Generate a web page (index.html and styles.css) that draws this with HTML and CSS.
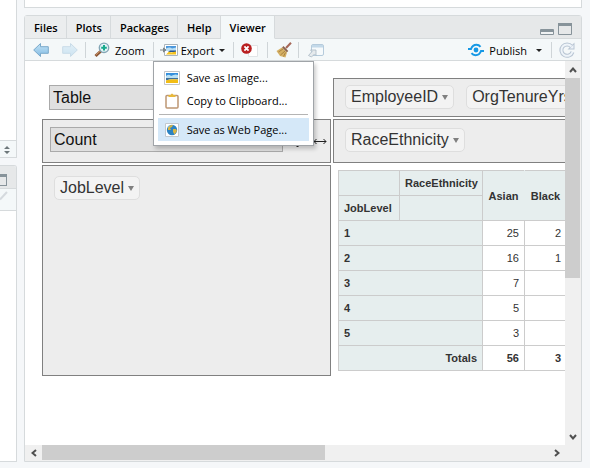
FILE: index.html
```html
<!DOCTYPE html>
<html lang="en">
<head>
<meta charset="utf-8">
<title>Viewer</title>
<link rel="stylesheet" href="styles.css">
</head>
<body>
<div class="workspace">
  <aside class="side">
    <section class="side-pane side-source">
      <footer class="status">
        <svg width="6" height="8" viewBox="0 0 6 8"><path d="M3 0L6 3H0zM3 8L0 5h6z" fill="#6d777a"/></svg>
      </footer>
    </section>
    <section class="side-pane side-console">
      <header class="side-head">
        <svg width="7" height="12" viewBox="0 0 7 12"><path d="M0 0h7v12H0v-1h6V3H0z" fill="#87939a"/></svg>
      </header>
      <div class="side-tools">
        <svg width="8" height="10" viewBox="0 0 8 10"><path d="M0 8.500L7 1" stroke="#d5dade" stroke-width="2" fill="none"/></svg>
      </div>
    </section>
  </aside>

  <main class="main">
    <section class="upper-pane"></section>
    <section class="pane">
      <header class="tabbar">
        <nav class="tabs">
          <button class="tab">Files</button>
          <button class="tab">Plots</button>
          <button class="tab">Packages</button>
          <button class="tab">Help</button>
          <button class="tab tab-active">Viewer</button>
        </nav>
        <div class="window-buttons">
          <button class="icon-button" aria-label="Minimize"><svg width="14" height="13" viewBox="0 0 14 13"><path d="M.5 7.500h13v5H.5z" fill="#f0f2f3" stroke="#87939a"/><path d="M1 7h12v3H1z" fill="#87939a"/></svg></button>
          <button class="icon-button" aria-label="Maximize"><svg width="14" height="13" viewBox="0 0 14 13"><path d="M.5 1.500h13v11H.5z" fill="#e6e8e9" stroke="#87939a"/><path d="M0 1h14v3H0z" fill="#87939a"/></svg></button>
        </div>
      </header>

      <div class="toolbar">
        <div class="tool-group group-nav">
          <button class="icon-button" aria-label="Back"><svg width="16" height="16" viewBox="0 0 16 16"><defs><linearGradient id="blue" x1="0" y1="0" x2="0" y2="1"><stop offset="0" stop-color="#c3e3f5"/><stop offset="1" stop-color="#83bce4"/></linearGradient></defs><path d="M.7 8L7.500 1.500v3.200h7.800v6.600H7.500v3.200z" fill="url(#blue)" stroke="#7aa9ca"/></svg></button>
          <button class="icon-button faded" aria-label="Forward" disabled><svg width="16" height="16" viewBox="0 0 16 16"><path d="M15.300 8L8.500 1.500v3.200H.7v6.600h7.800v3.200z" fill="url(#blue)" stroke="#7aa9ca"/></svg></button>
        </div>
        <div class="tool-group group-zoom">
          <button class="tool-button"><svg width="16" height="16" viewBox="0 0 16 16"><path d="M1.500 14L7 9" stroke="#8b5635" stroke-width="3"/><path d="M1.800 13L6.500 8.800" stroke="#c99264" stroke-width="1"/><circle cx="10" cy="5.800" r="4.700" fill="#e2f3f7" stroke="#83a5b5" stroke-width="1.400"/><path d="M10 3v5.600M7.200 5.800h5.600" stroke="#17a98c" stroke-width="2"/></svg><span>Zoom</span></button>
        </div>
        <div class="tool-group group-export">
          <button class="tool-button"><svg width="18" height="16" viewBox="0 0 18 16"><path d="M4.500 2.500h13v11h-13z" fill="#fff" stroke="#aab5bc"/><path d="M6 4h10v4H6z" fill="#4a97dc"/><path d="M6 6.500q4-2 6 0l4-1V9H6z" fill="#b8def4"/><path d="M10 8.500h6V10H8z" fill="#24538f"/><path d="M6 12.500l3-3 2 1 5-1v3z" fill="#f4c21d"/><path d="M0 8h4M3.500 6L6 8l-2.500 2z" stroke="#7d8588" fill="#7d8588"/></svg><span>Export</span><i class="caret"></i></button>
          <div class="menu" role="menu">
            <button class="menu-item" role="menuitem"><svg width="16" height="16" viewBox="0 0 16 16"><path d="M.5 1.500h15v13H.5z" fill="#fff" stroke="#c2c5c8"/><path d="M2 3h12v5H2z" fill="#348fdc"/><path d="M2 6q3-2.500 5 0 4-2.500 7-1v3H2z" fill="#b9e0f4"/><path d="M2 8h12v1.500q-7-1-12 1z" fill="#3f7099"/><path d="M2 13v-2.500q5-2 12-1V13z" fill="#f2bd16"/></svg><span>Save as Image...</span></button>
            <button class="menu-item" role="menuitem"><svg width="16" height="16" viewBox="0 0 16 16"><rect x="2" y="2.500" width="12" height="12.500" rx="1" fill="#fff" stroke="#bd9673" stroke-width="1.500"/><path d="M4.500 4V2h2Q8-1 9.500 2h2v2z" fill="#e8b93c"/></svg><span>Copy to Clipboard...</span></button>
            <hr class="menu-rule">
            <button class="menu-item menu-item-active" role="menuitem"><svg width="16" height="16" viewBox="0 0 16 16"><path d="M1.500 1.500h13v13h-13z" fill="#fff" stroke="#c1c8ce"/><circle cx="8" cy="8" r="5.200" fill="#2b83c3"/><path d="M4 5q2-2.500 5-2L8 5 6 6l1 2H4zM9 7h3l1 2-2.500 3.500L9 10z" fill="#d8b543"/><path d="M3.500 6q0-2 2.500-2.500" stroke="#83c4ed" fill="none"/></svg><span>Save as Web Page...</span></button>
          </div>
        </div>
        <div class="tool-group group-icon">
          <button class="icon-button" aria-label="Remove viewer item"><svg width="18" height="16" viewBox="0 0 18 16"><path d="M7.500 3.500h9v11h-9z" fill="#fff" stroke="#e1e5e7"/><circle cx="5.500" cy="6.500" r="5.300" fill="#b91f20"/><path d="M3.400 4.400l4.200 4.200M7.600 4.400L3.400 8.600" stroke="#fff" stroke-width="1.800"/></svg></button>
        </div>
        <div class="tool-group group-broom">
          <button class="icon-button" aria-label="Clear all"><svg width="16" height="16" viewBox="0 0 16 16"><path d="M10 6L15 .8" stroke="#a66758" stroke-width="2"/><path d="M6 5.500l5 5-1.500 5L4 14 .5 9z" fill="#d5b064"/><path d="M2.500 10L7 7M4.500 13L9 9M7.500 14.500l2-4" stroke="#a98443" fill="none"/><path d="M6.800 4.800l4.800 4.800" stroke="#8b634d" stroke-width="2"/></svg></button>
        </div>
        <div class="tool-group group-popout">
          <button class="icon-button" aria-label="Show in new window"><svg width="16" height="16" viewBox="0 0 16 16"><rect x="3.500" y="2.500" width="12" height="11" rx="1.500" fill="#f6fafc" stroke="#b5cbdc"/><path d="M4 3h11v2.500H4z" fill="#c3d9e9"/><path d="M.5 13.500L4 9.500 2.500 8H8v5.500L6.500 12 3.500 15z" fill="#e5eaed" stroke="#a9b9c4" stroke-width=".8"/></svg></button>
        </div>
        <div class="tool-group group-publish">
          <button class="tool-button"><svg width="16" height="14" viewBox="0 0 16 14"><circle cx="8" cy="7" r="2.400" fill="#1598e5"/><path d="M0 6h3Q4.500 1.800 8.500 1.800q2.500 0 4 2M16 8h-3q-1.500 4.200-5.500 4.200-2.500 0-4-2" stroke="#1598e5" stroke-width="2" fill="none"/></svg><span>Publish</span><i class="caret caret-far"></i></button>
        </div>
        <div class="tool-group group-refresh">
          <button class="icon-button" aria-label="Refresh"><svg width="16" height="16" viewBox="0 0 16 16"><path d="M12.500 4.500A5.700 5.700 0 1 0 13.500 10" stroke="#b8c5d3" stroke-width="4" fill="none"/><path d="M15.500 .5v7h-7z" fill="#b8c5d3"/><path d="M12.500 4.500A5.700 5.700 0 1 0 13.500 10" stroke="#eef4f9" stroke-width="2" fill="none"/><path d="M14.500 2.800v3.700h-3.700z" fill="#eef4f9"/></svg></button>
        </div>
      </div>

      <div class="viewer">
        <div class="canvas">
          <div class="pivot">
            <div class="renderer"><select class="picker" aria-label="Renderer"><option>Table</option></select></div>
            <div class="zone unused">
              <button class="attr">EmployeeID<i></i></button>
              <button class="attr">OrgTenureYrs<i></i></button>
            </div>
            <div class="zone values">
              <select class="picker" aria-label="Aggregator"><option>Count</option></select>
              <span class="sorts">
                <a href="#" aria-label="Row order"><svg width="7" height="14" viewBox="0 0 7 14"><path d="M3.500 1v12M1 3.500L3.500 1 6 3.500M1 10.500L3.500 13 6 10.500" stroke="#222" fill="none"/></svg></a>
                <a href="#" aria-label="Column order"><svg width="14" height="7" viewBox="0 0 14 7"><path d="M1 3.500h12M3.500 1L1 3.500 3.500 6M10.500 1L13 3.500 10.500 6" stroke="#222" fill="none"/></svg></a>
              </span>
            </div>
            <div class="zone cols"><button class="attr">RaceEthnicity<i></i></button></div>
            <div class="zone rows"><button class="attr">JobLevel<i></i></button></div>
            <div class="output">
              <table class="result">
                <colgroup><col class="c-level"><col class="c-race"><col class="c-num"><col class="c-num"></colgroup>
                <thead>
                  <tr><th></th><th>RaceEthnicity</th><th class="group" rowspan="2">Asian</th><th class="group" rowspan="2">Black</th></tr>
                  <tr><th>JobLevel</th><th></th></tr>
                </thead>
                <tbody>
                  <tr><th colspan="2">1</th><td>25</td><td>2</td></tr>
                  <tr><th colspan="2">2</th><td>16</td><td>1</td></tr>
                  <tr><th colspan="2">3</th><td>7</td><td></td></tr>
                  <tr><th colspan="2">4</th><td>5</td><td></td></tr>
                  <tr><th colspan="2">5</th><td>3</td><td></td></tr>
                  <tr class="totals"><th colspan="2">Totals</th><td>56</td><td>3</td></tr>
                </tbody>
              </table>
            </div>
          </div>
        </div>
        <div class="scroll scroll-y">
          <button class="scroll-end" aria-label="Scroll up"><svg width="8" height="6" viewBox="0 0 8 6"><path d="M1 5l3-3.500L7 5" fill="none" stroke="#505050" stroke-width="2"/></svg></button>
          <div class="track"><div class="thumb"></div></div>
          <button class="scroll-end" aria-label="Scroll down"><svg width="8" height="6" viewBox="0 0 8 6"><path d="M1 1l3 3.500L7 1" fill="none" stroke="#505050" stroke-width="2"/></svg></button>
        </div>
        <div class="scroll scroll-x">
          <button class="scroll-end" aria-label="Scroll left"><svg width="6" height="8" viewBox="0 0 6 8"><path d="M5 1L1.500 4 5 7" fill="none" stroke="#505050" stroke-width="2"/></svg></button>
          <div class="track"><div class="thumb"></div></div>
          <button class="scroll-end" aria-label="Scroll right"><svg width="6" height="8" viewBox="0 0 6 8"><path d="M1 1l3.500 3L1 7" fill="none" stroke="#505050" stroke-width="2"/></svg></button>
        </div>
        <div class="corner"></div>
      </div>
    </section>
  </main>
</div>
</body>
</html>
```
FILE: styles.css
```css
* { box-sizing: border-box; }
body {
  margin: 0;
  background: #f5f7f9;
  color: #000;
  font: 11px "Open Sans", "Noto Sans", sans-serif;
}
button, select { font: inherit; color: inherit; margin: 0; padding: 0; border: 0; background: none; }
svg { display: block; flex: none; }

.workspace {
  display: grid;
  grid-template-columns: 17px minmax(0, 1fr);
  gap: 7px;
  height: 100vh;
  padding: 0 8px 6px 0;
}
.side, .main { display: flex; flex-direction: column; gap: 7px; min-height: 0; }
.side-pane { border: solid #d6dadc; border-width: 0 1px 1px 0; background: #fff; }
.side-source { flex: 0 0 158px; display: flex; flex-direction: column; justify-content: flex-end; }
.side-console { flex: 1; border-top-width: 1px; border-top-right-radius: 3px; overflow: hidden; }
.status { height: 17px; padding: 5px 0 0 4px; border-top: 1px solid #d6dadc; background: #f4f8f9; }
.side-head { height: 23px; padding-top: 8px; background: #e6e8e9; border-bottom: 1px solid #d6dadc; }
.side-tools { height: 22px; padding-top: 2px; background: #f4f8f9; border-bottom: 1px solid #d6dadc; }

.upper-pane { flex: 0 0 8px; border: 1px solid #d6dadc; border-top: 0; background: #fff; }
.pane {
  flex: 1;
  display: flex;
  flex-direction: column;
  min-height: 0;
  border: 1px solid #d6dadc;
  border-radius: 3px 3px 0 0;
  background: #fff;
}
.tabbar { display: flex; justify-content: space-between; height: 23px; background: #e6e8e9; border-bottom: 1px solid #d6dadc; }
.tabs { display: flex; height: 23px; }
.tab {
  padding: 0 8px 0 9px;
  border: solid #d6dadc;
  border-width: 0 1px 1px 0;
  background: #ebedee;
  font-weight: 600;
}
.tab-active { background: #f4f8f9; border-bottom-color: #f4f8f9; }
.window-buttons { display: flex; gap: 4px; padding: 4px 9px 0 0; }
.icon-button { display: block; height: 16px; }
.faded { opacity: .35; }

.toolbar { display: flex; height: 22px; background: #f4f8f9; border-bottom: 1px solid #d6dadc; }
.tool-group { display: flex; align-items: center; height: 22px; position: relative; }
.tool-group + .tool-group::before { content: ""; align-self: center; width: 1px; height: 16px; background: #cfd5d8; }
.tool-button { display: flex; align-items: center; gap: 5px; height: 22px; }
.group-nav { gap: 13px; padding: 0 7px 0 8px; }
.group-zoom .tool-button { padding: 0 8px; }
.group-export .tool-button { gap: 3px; padding: 0 8px 0 6px; }
.group-icon .icon-button { margin: 0 8px 0 7px; }
.group-broom .icon-button { margin: 0 6px 0 8px; }
.group-popout .icon-button { margin-left: 9px; }
.tool-group.group-publish { margin-left: auto; }
.tool-group.group-publish::before { display: none; }
.group-publish .tool-button { padding-right: 9px; }
.group-refresh .icon-button { margin: 0 6px 0 7px; }
.caret { border: solid transparent; border-width: 3px 3px 0; border-top-color: #222; margin-left: 2px; }
.caret-far { margin-left: 4px; }

.menu {
  position: absolute;
  z-index: 5;
  top: 22px;
  left: 0;
  width: 161px;
  padding: 4px;
  border: 1px solid #a0a4a8;
  background: #fff;
  box-shadow: 2px 3px 4px rgba(0, 0, 0, .2);
}
.menu-item { display: flex; align-items: center; gap: 7px; width: 100%; height: 23px; padding-left: 6px; white-space: nowrap; }
.menu-item-active { background: #d5e8f8; }
.menu-rule { height: 1px; margin: 2px 1px 3px; border: 0; background: #b4b4b4; }

.viewer { flex: 1; display: grid; grid-template: minmax(0, 1fr) 16px / minmax(0, 1fr) 16px; min-height: 0; }
.canvas { overflow: hidden; padding: 17px 0 0 17px; font: 16px/18px "Liberation Sans", Arial, sans-serif; color: #333; }
.pivot { display: grid; grid-template: 39px 44px 211px / 289px max-content; gap: 2px; }
.zone { border: 1px solid #808080; background: #ededed; }
.renderer { padding: 7px; }
.picker {
  appearance: none;
  width: 233px;
  height: 25px;
  padding: 0 3px;
  border: 1px solid #aaa;
  background: #e0e0e0;
  color: #111;
}
.renderer .picker { width: 200px; }
.values { display: flex; align-items: flex-start; padding: 7px 0 0 7px; }
.sorts { display: flex; align-items: center; gap: 12px; padding: 7px 0 0 11px; }
.unused, .cols, .rows { display: flex; align-items: flex-start; gap: 12px; padding: 6px 11px; }
.unused { padding-right: 90px; }
.cols { padding-top: 8px; }
.rows { padding-top: 10px; }
.attr {
  display: flex;
  align-items: center;
  gap: 4px;
  height: 24px;
  padding: 0 5px;
  border: 1px solid #dedede;
  border-radius: 5px;
  background: #f3f3f3;
}
.attr i { border: solid transparent; border-width: 5px 3px 0; border-top-color: #808080; }

.output { padding: 5px; }
.result { border-collapse: collapse; table-layout: fixed; width: 227px; font-size: 11px; line-height: 14px; }
.c-level { width: 61px; }
.c-race { width: 83px; }
.c-num { width: 42px; }
.result th, .result td { height: 25px; padding: 0 5px; border: 1px solid #ccc; text-align: left; white-space: nowrap; }
.result th { background: #e6eeee; }
.result td { text-align: right; }
.result .group { text-align: center; border-right-color: #e6eeee; }
.result .totals th { text-align: right; }
.totals td { font-weight: 700; }

.scroll { display: flex; background: #f0f0f0; }
.scroll-y { flex-direction: column; }
.track { flex: 1; display: flex; }
.scroll-y .track { flex-direction: column; }
.thumb { background: #cdcdcd; }
.scroll-y .thumb { height: 57%; margin-right: 1px; }
.scroll-x .thumb { width: 56%; margin-bottom: 1px; }
.scroll-end { display: flex; align-items: center; justify-content: center; flex: 0 0 17px; }
.corner { background: #f0f0f0; }
```
